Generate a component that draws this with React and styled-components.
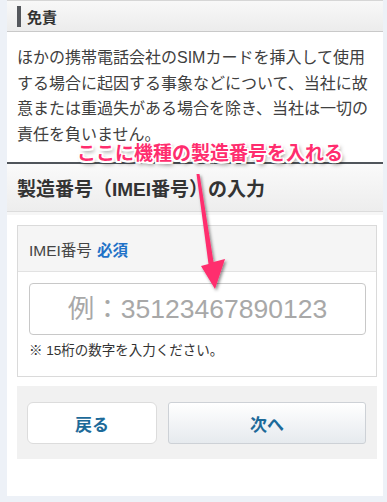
import styled, {createGlobalStyle} from 'styled-components'

const GlobalStyle = createGlobalStyle`
  html, body {
    margin: 0;
    padding: 0;
    background: #edf1f7;
  }
  body {
    font-family: "Liberation Sans", "Noto Sans CJK JP", sans-serif;
    color: #333;
  }
`

export const Page = styled.div`
  padding: 0 4px 5px 7px;
`

export const Panel = styled.div`
  position: relative;
  background: #ffffff;
`

export const TopHead = styled.div`
  height: 30px;
  border-top: 1px solid #d6d6d6;
  border-bottom: 1px solid #c9c9c9;
  background: linear-gradient(to bottom, #f8f8f8, #ececec);
  display: flex;
  align-items: center;
  padding-left: 10px;
  font-size: 15px;
  font-weight: bold;
  color: #333;
`

export const Bar = styled.span`
  width: 4px;
  height: 21px;
  background: #55585d;
  margin-right: 6px;
`

export const Text = styled.p`
  margin: 0;
  padding: 13px 6px 15px 10px;
  font-size: 16px;
  line-height: 25.6px;
  color: #404040;
`

export const SectionHead = styled.div`
  height: 47px;
  border-top: 2px solid #50555b;
  border-bottom: 1px solid #dcdcdc;
  box-shadow: 0 3px 0 #f6f6f6;
  background: linear-gradient(to bottom, #fafafa, #ededed);
  display: flex;
  align-items: center;
  padding-left: 10px;
  font-size: 19px;
  font-weight: bold;
  color: #333;
`

export const Body = styled.div`
  padding: 13px 6px 37px 10px;
`

export const Card = styled.div`
  border: 1px solid #dadada;
`

export const CardHead = styled.div`
  height: 45px;
  background: #f5f5f5;
  border-bottom: 1px solid #e2e2e2;
  display: flex;
  align-items: center;
  padding-left: 11px;
  font-size: 15.5px;
  color: #444;
`

export const Required = styled.span`
  color: #1f72c8;
  font-weight: bold;
  margin-left: 5px;
`

export const CardBody = styled.div`
  padding: 11px 10px 16px 11px;
`

export const Input = styled.input`
  box-sizing: border-box;
  display: block;
  width: 100%;
  height: 52px;
  border: 1px solid #c8c8c8;
  border-radius: 4px;
  background: #fff;
  text-align: center;
  font-family: inherit;
  font-size: 26.5px;
  color: #333;
  outline: none;
  &::placeholder {
    color: #a8a8a8;
  }
`

export const Note = styled.div`
  margin-top: 7px;
  font-size: 13.5px;
  line-height: 18px;
  color: #333;
`

export const Actions = styled.div`
  margin-top: 9px;
  background: #f1f1f1;
  padding: 16px 11px 15px 10px;
  display: grid;
  grid-template-columns: 130px 1fr;
  gap: 11px;
`

export const Button = styled.button`
  height: 42px;
  border: 1px solid ${p => (p.$primary ? '#cdd1d6' : '#dcdcdc')};
  border-radius: ${p => (p.$primary ? '3px' : '6px')};
  background: ${p => (p.$primary ? 'linear-gradient(to bottom, #ffffff, #e6eaee)' : '#ffffff')};
  font-family: inherit;
  font-size: 17px;
  font-weight: bold;
  color: #1d6a99;
  cursor: pointer;
`

export const Callout = styled.div`
  position: absolute;
  left: 70px;
  top: 138px;
  font-size: 19px;
  font-weight: bold;
  color: #ff2d6e;
  white-space: nowrap;
  text-shadow:
    -1.5px -1.5px 0 #fff, 1.5px -1.5px 0 #fff, -1.5px 1.5px 0 #fff, 1.5px 1.5px 0 #fff,
    0 -1.5px 0 #fff, 0 1.5px 0 #fff, -1.5px 0 0 #fff, 1.5px 0 0 #fff,
    2px 3px 4px rgba(0, 0, 0, 0.55);
`

export const Arrow = styled.svg`
  position: absolute;
  left: 0;
  top: 0;
  width: 100%;
  height: 300px;
  pointer-events: none;
  overflow: visible;
`

const ArrowShape = () => (
  <Arrow viewBox="0 0 376 300">
    <defs>
      <filter id="sh" x="-50%" y="-50%" width="200%" height="200%">
        <feDropShadow dx="1.5" dy="2" stdDeviation="1.5" floodColor="#000" floodOpacity="0.45" />
      </filter>
    </defs>
    <polygon
      filter="url(#sh)"
      fill="#ff2d6e"
      points="189.5,174 192.5,174 206.5,262 218,259 208,289 194,266 201.5,264"
    />
  </Arrow>
)

const App = () => {
  return (
    <Page>
      <GlobalStyle />
      <Panel>
        <TopHead>
          <Bar />
          免責
        </TopHead>
        <Text>
          ほかの携帯電話会社のSIMカードを挿入して使用する場合に起因する事象などについて、当社に故意または重過失がある場合を除き、当社は一切の責任を負いません。
        </Text>
        <SectionHead>製造番号（IMEI番号）の入力</SectionHead>
        <Body>
          <Card>
            <CardHead>
              IMEI番号<Required>必須</Required>
            </CardHead>
            <CardBody>
              <Input placeholder="例：35123467890123" />
              <Note>※ 15桁の数字を入力ください。</Note>
            </CardBody>
          </Card>
          <Actions>
            <Button>戻る</Button>
            <Button $primary>次へ</Button>
          </Actions>
        </Body>
        <ArrowShape />
        <Callout>ここに機種の製造番号を入れる</Callout>
      </Panel>
    </Page>
  )
}

export default App
